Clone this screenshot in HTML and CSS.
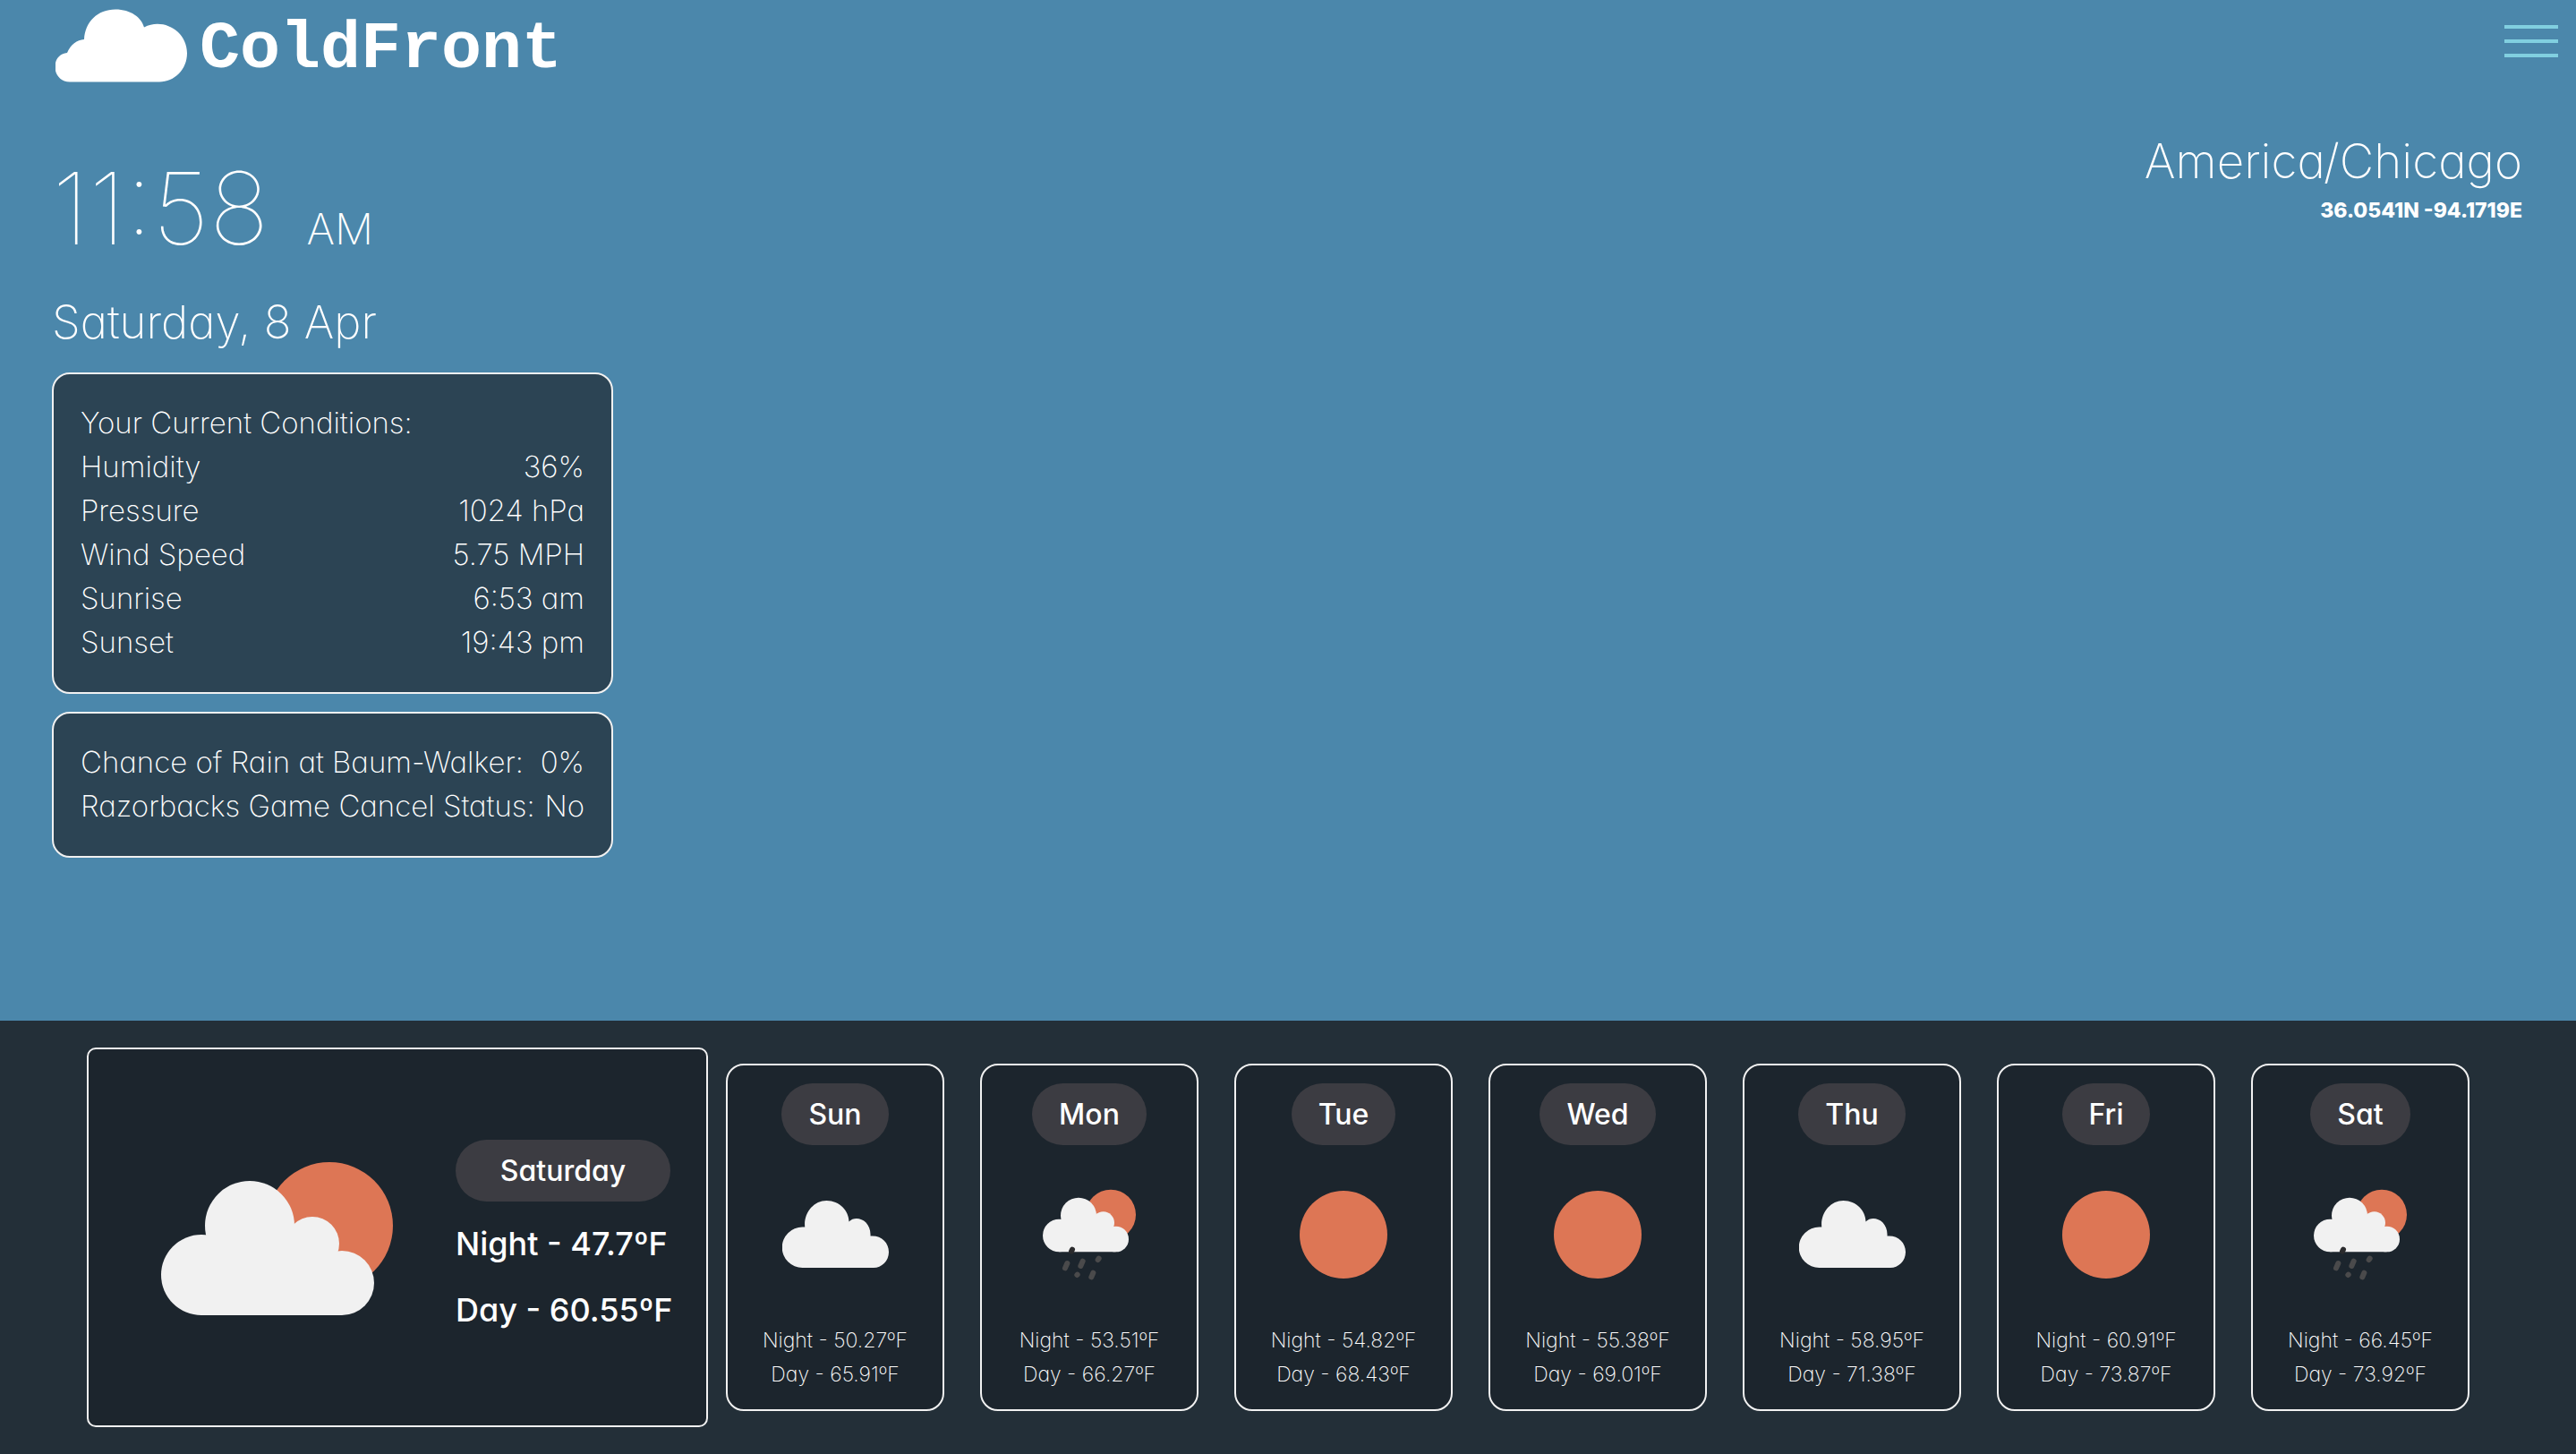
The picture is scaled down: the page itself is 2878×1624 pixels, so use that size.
FILE: index.html
```html
<!DOCTYPE html>
<html lang="en">
<head>
<meta charset="utf-8">
<meta name="viewport" content="width=device-width, initial-scale=1">
<title>ColdFront</title>
<link rel="stylesheet" href="styles.css">
</head>
<body>
<svg class="defs" aria-hidden="true">
  <symbol id="cloud" viewBox="0 0 238 150">
    <path fill="#f1f1f1" d="M45 150a45 45 0 0 1 0-91h5.500C47 28 70 0 99 0c29 0 50 23 50 47 16-16 50-3 48 32 24-2 41 14 41 36 0 20-16 35-34 35z"/>
  </symbol>
  <symbol id="sun" viewBox="0 0 98 98"><circle cx="49" cy="49" r="49" fill="#dd7655"/></symbol>
  <symbol id="partly" viewBox="180 1298 259 171">
    <circle cx="368" cy="1369" r="71" fill="#dd7655"/>
    <g fill="#f1f1f1">
      <circle cx="279" cy="1369" r="50"/><circle cx="225" cy="1424" r="45"/>
      <circle cx="349" cy="1389" r="30"/><circle cx="382" cy="1433" r="36"/>
      <path d="M225 1400l40-40h50l50 40 17 69H225z"/>
    </g>
  </symbol>
  <symbol id="rain" viewBox="315 504 312 306">
    <circle cx="543" cy="590" r="84" fill="#dd7655"/>
    <g fill="#f1f1f1">
      <circle cx="435" cy="593" r="60"/><circle cx="370" cy="660" r="55"/>
      <circle cx="518" cy="617" r="37"/><circle cx="560" cy="672" r="43"/>
      <path d="M370 630l40-50h60l60 50 30 85H370z"/>
    </g>
    <g stroke="#4a4a4b" stroke-width="18" stroke-linecap="round">
      <path d="M397 753l-7 16M449 746l-7 16M503 737l-3 4M431 791l-1 1M484 785l-6 14"/>
      <path stroke="#2b2b2d" d="M414 707l-3 6"/>
    </g>
  </symbol>
</svg>

<header class="topbar">
  <a class="brand" href="#">
    <svg class="brand-mark" viewBox="62 10 147 81" aria-hidden="true">
      <path fill="#fff" d="M78 91C57 91 56 60 75 58.500 79 49 86 44 94 43.500 95 24 109 10 129 10c17 0 29 9 32 20 21-11 48 4 48 29 0 18-14 32-31 32z"/>
    </svg>
    <span>ColdFront</span>
  </a>
  <button class="menu" type="button" aria-label="Menu"><i></i><i></i><i></i></button>
</header>

<main class="current">
  <section class="now">
    <div class="time">11:58 <span class="ampm">AM</span></div>
    <div class="date">Saturday, 8 Apr</div>
    <div class="panel">
      <h2>Your Current Conditions:</h2>
      <dl>
        <div><dt>Humidity</dt><dd>36%</dd></div>
        <div><dt>Pressure</dt><dd>1024 hPa</dd></div>
        <div><dt>Wind Speed</dt><dd>5.75 MPH</dd></div>
        <div><dt>Sunrise</dt><dd>6:53 am</dd></div>
        <div><dt>Sunset</dt><dd>19:43 pm</dd></div>
      </dl>
    </div>
    <div class="panel">
      <dl>
        <div><dt>Chance of Rain at Baum-Walker:</dt><dd>0%</dd></div>
        <div><dt>Razorbacks Game Cancel Status:</dt><dd>No</dd></div>
      </dl>
    </div>
  </section>
  <section class="place">
    <div class="zone">America/Chicago</div>
    <div class="coords">36.0541N -94.1719E</div>
  </section>
</main>

<section class="forecast">
  <article class="today">
    <svg class="today-icon" aria-hidden="true"><use href="#partly"/></svg>
    <div class="today-info">
      <h3 class="pill">Saturday</h3>
      <p>Night - 47.7ºF</p>
      <p>Day - 60.55ºF</p>
    </div>
  </article>
  <div class="days">
    <article class="day"><h3 class="pill">Sun</h3><svg class="i-cloud" aria-hidden="true"><use href="#cloud"/></svg><p>Night - 50.27ºF<br>Day - 65.91ºF</p></article>
    <article class="day"><h3 class="pill">Mon</h3><svg class="i-rain" aria-hidden="true"><use href="#rain"/></svg><p>Night - 53.51ºF<br>Day - 66.27ºF</p></article>
    <article class="day"><h3 class="pill">Tue</h3><svg class="i-sun" aria-hidden="true"><use href="#sun"/></svg><p>Night - 54.82ºF<br>Day - 68.43ºF</p></article>
    <article class="day"><h3 class="pill">Wed</h3><svg class="i-sun" aria-hidden="true"><use href="#sun"/></svg><p>Night - 55.38ºF<br>Day - 69.01ºF</p></article>
    <article class="day"><h3 class="pill">Thu</h3><svg class="i-cloud" aria-hidden="true"><use href="#cloud"/></svg><p>Night - 58.95ºF<br>Day - 71.38ºF</p></article>
    <article class="day"><h3 class="pill">Fri</h3><svg class="i-sun" aria-hidden="true"><use href="#sun"/></svg><p>Night - 60.91ºF<br>Day - 73.87ºF</p></article>
    <article class="day"><h3 class="pill">Sat</h3><svg class="i-rain" aria-hidden="true"><use href="#rain"/></svg><p>Night - 66.45ºF<br>Day - 73.92ºF</p></article>
  </div>
</section>
</body>
</html>
```
FILE: styles.css
```css
* { box-sizing: border-box; margin: 0; padding: 0; }

body {
  display: flex;
  flex-direction: column;
  min-height: 100vh;
  background: #4b87ab;
  color: #fff;
  font-family: Inter, "Liberation Sans", sans-serif;
  font-weight: 200;
  font-feature-settings: "cv11";
}

.defs { display: none; }

.topbar {
  display: flex;
  justify-content: space-between;
  align-items: flex-start;
  padding: 10px 20px 0 62px;
}
.brand {
  display: flex;
  align-items: flex-end;
  gap: 14px;
  color: #fff;
  text-decoration: none;
  font: bold 75px/72px "Liberation Mono", monospace;
}
.brand-mark { width: 147px; height: 82px; }
.menu {
  display: grid;
  gap: 12px;
  width: 60px;
  margin-top: 18px;
  border: 0;
  background: none;
}
.menu i { height: 4px; background: #81cfe0; }

.current {
  flex: 1;
  display: flex;
  justify-content: space-between;
  padding: 58px 60px 60px 58px;
}
.now { width: 627px; }
.time {
  display: flex;
  align-items: baseline;
  gap: 42px;
  font-size: 112px;
  font-weight: 100;
  line-height: 164px;
}
.ampm { font-size: 48px; font-weight: 200; line-height: 60px; }
.date { padding-top: 6px; padding-bottom: 16px; font-size: 51px; line-height: 80px; }
.panel {
  padding: 30px 30px 31px;
  border: 2px solid #f1f1f1;
  border-radius: 20px;
  background: #2c4454;
  font-size: 33px;
  line-height: 49px;
}
.panel + .panel { margin-top: 20px; }
.panel h2 { font-size: 33px; font-weight: 200; }
.panel dl > div { display: flex; justify-content: space-between; white-space: nowrap; }

.place { text-align: right; }
.zone { font-size: 53px; line-height: 60px; }
.coords { font-size: 23px; font-weight: 800; line-height: 50px; }

.forecast {
  display: flex;
  align-items: center;
  padding: 30px 99px 30px 97px;
  background: #232f38;
}
.today, .day {
  border: 2px solid #f1f1f1;
  background: #1c252d;
}
.today {
  flex: none;
  display: flex;
  align-items: center;
  justify-content: space-between;
  width: 694px;
  height: 424px;
  padding: 0 40px 0 81px;
  border-radius: 10px;
}
.today-icon { width: 259px; height: 171px; margin-top: 2px; }
.today-info { width: 240px; padding-bottom: 2px; font-size: 36px; font-weight: 500; line-height: 54px; }
.today-info p { margin-top: 20px; white-space: nowrap; }
.pill {
  padding: 10px 30px;
  border-radius: 35px;
  background: #3c3c42;
  font-size: 32px;
  font-weight: 500;
  line-height: 49px;
  text-align: center;
}
.days {
  flex: 1;
  display: grid;
  grid-template-columns: repeat(7, 1fr);
  gap: 40px;
  padding: 0 20px;
}
.day {
  display: flex;
  flex-direction: column;
  align-items: center;
  justify-content: space-between;
  height: 388px;
  padding: 20px 0;
  border-radius: 20px;
}
.day p { font-size: 23px; line-height: 38px; text-align: center; white-space: nowrap; }
.i-cloud { width: 119px; height: 75px; }
.i-sun { width: 98px; height: 98px; }
.i-rain { width: 104px; height: 102px; }
```
